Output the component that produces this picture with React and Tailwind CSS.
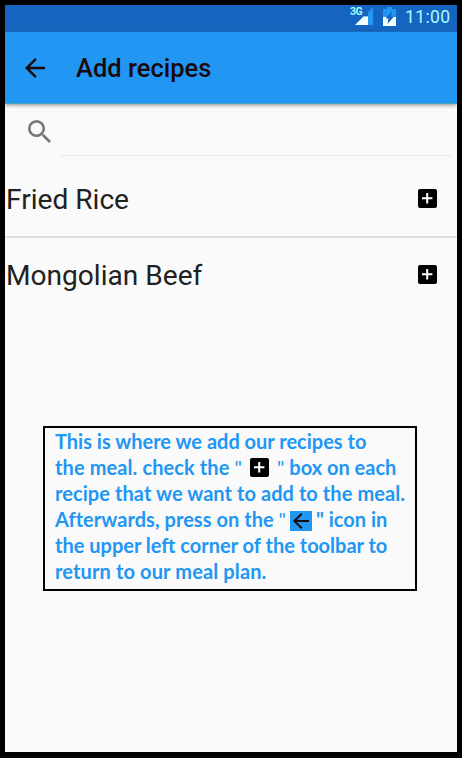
import React from "react";

function PlusBox({ className = "" }) {
  return (
    <svg viewBox="0 0 19 19" className={`h-[19px] w-[19px] shrink-0 ${className}`}>
      <rect width="19" height="19" rx="2" fill="#000" />
      <path d="M9.2 4v10.4M4 9.2h10.4" stroke="#fff" strokeWidth="2" />
    </svg>
  );
}

function BackArrow({ className = "", color = "#190a0c" }) {
  return (
    <svg viewBox="4 4 16 16" className={className}>
      <path d="M20 11H7.83l5.59-5.59L12 4l-8 8 8 8 1.41-1.41L7.83 13H20v-2z" fill={color} />
    </svg>
  );
}

function StatusBar() {
  return (
    <div className="flex h-[27px] shrink-0 items-start border-b border-[#1a76d2] bg-[#1565c0] text-[#a6fbfd]">
      <span className="ml-[345px] mt-[2px] w-[12px] font-['Roboto'] text-[10.5px] leading-[10px] font-bold tracking-[-0.6px]">3G</span>
      <svg viewBox="0 0 18 18" className="-ml-[7px] mt-[2px] h-[18px] w-[18px] shrink-0">
        <path d="M18 0v18H0L9 9h4V5z" fill="#2196f3" />
        <path d="M13 5v13H0L8.500 9.500H13z" fill="#f4ffff" />
      </svg>
      <svg viewBox="0 0 13 19" className="ml-[10px] mt-[2px] h-[19px] w-[13px] shrink-0">
        <path d="M4 0h5v2h4v8H0V2h4z" fill="#2196f3" />
        <path d="M0 10h13v9H0z" fill="#f4ffff" />
        <path d="M9 4L2.5 11.500H5.500L4.500 17l6.500-7.500H8z" fill="#1565c0" />
      </svg>
      <span className="ml-[9px] mt-[2px] font-['Roboto'] text-[17.5px] leading-[20px] tracking-[0.4px]">11:00</span>
    </div>
  );
}

function RecipeRow({ name, className }) {
  return (
    <div className={`flex items-center justify-between pr-[20px] pl-px ${className}`}>
      <span className="mt-[4px] font-['Roboto'] text-[28.1px] leading-[32px] text-[#212121]">{name}</span>
      <PlusBox />
    </div>
  );
}

export default function App() {
  return (
    <div className="flex h-[758px] w-[462px] flex-col overflow-hidden border-x-[5px] border-t-[5px] border-b-[6px] border-black bg-[#fafafa]">
      <StatusBar />
      <header className="flex h-[72px] shrink-0 items-center border-b border-[#49a5c4] bg-[#2196f3] pl-[20px] shadow-[0_1px_4px_rgba(0,0,0,0.45)]">
        <BackArrow className="h-[20px] w-[20px]" />
        <h1 className="ml-[31px] font-['Roboto'] text-[25.5px] leading-[30px] font-medium text-[#190a0c]">Add recipes</h1>
      </header>
      <div className="flex h-[52px] shrink-0 pl-[23px]">
        <svg viewBox="3 3 17.5 17.5" className="mt-[16px] h-[23px] w-[23px]">
          <path d="M15.5 14h-.79l-.28-.27A6.47 6.47 0 0 0 16 9.5 6.5 6.5 0 1 0 9.5 16c1.61 0 3.09-.59 4.23-1.57l.27.28v.79l5 4.99L20.49 19l-4.99-5zm-6 0C7.01 14 5 11.99 5 9.5S7.01 5 9.5 5 14 7.01 14 9.5 11.99 14 9.5 14z" fill="#777" />
        </svg>
        <div className="ml-[9px] w-[391px] border-b border-[#e8e8e8]" />
      </div>
      <RecipeRow name="Fried Rice" className="h-[82px] shrink-0 border-b-2 border-[#dedede] pt-[4px]" />
      <RecipeRow name="Mongolian Beef" className="h-[72px] shrink-0" />
      <section className="ml-[38px] mt-[116px] h-[165px] w-[374px] shrink-0 border-2 border-black pl-[10px] font-['Lato'] text-[20px] leading-[26px] font-bold whitespace-nowrap text-[#2196f3]">
        <p>This is where we add our recipes to</p>
        <p className="flex items-center">
          <span className="w-[195px] tracking-[0.1px]">the meal. check the <span className="font-normal">"</span></span>
          <PlusBox />
          <span className="ml-[8px]"><span className="font-normal">"</span> box on each</span>
        </p>
        <p className="tracking-[0.07px]">recipe that we want to add to the meal.</p>
        <p className="flex items-center">
          <span className="w-[235px] tracking-[0.04px]">Afterwards, press on the <span className="font-normal">"</span></span>
          <span className="mt-[3px] flex h-[20px] w-[22px] items-center justify-center bg-[#2196f3]">
            <BackArrow className="h-[16px] w-[16px]" />
          </span>
          <span className="ml-[4px]">" icon in</span>
        </p>
        <p>the upper left corner of the toolbar to</p>
        <p className="tracking-[0.13px]">return to our meal plan.</p>
      </section>
    </div>
  );
}
